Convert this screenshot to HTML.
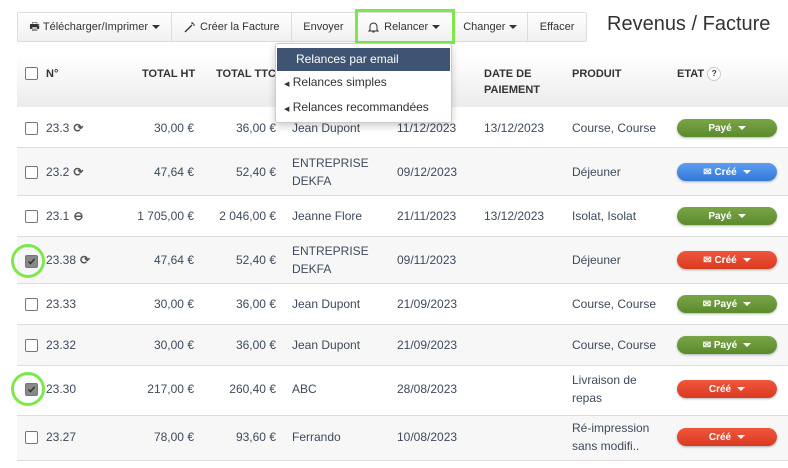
<!DOCTYPE html>
<html><head><meta charset="utf-8"><style>
*{box-sizing:border-box;margin:0;padding:0}
body{width:788px;height:468px;background:#fff;font-family:"Liberation Sans",sans-serif;color:#444;position:relative;overflow:hidden;font-size:12px}
.a{position:absolute;white-space:nowrap}
.tb{position:absolute;top:12px;left:17px;height:30px;width:570px;border:1px solid #ddd;border-radius:2px;background:linear-gradient(#fff,#f0f0f0);display:flex}
.tb div{height:28px;border-right:1px solid #ddd;font-size:11px;color:#333;display:flex;align-items:center;justify-content:center}
.car{display:inline-block;border-left:4px solid transparent;border-right:4px solid transparent;border-top:4px solid #333;margin-left:4px}
.hdr{position:absolute;left:17px;top:55px;width:771px;height:52px;background:linear-gradient(#fff,#ececec)}
.h{font-weight:bold;font-size:11px;color:#333;line-height:16px}
.row{position:absolute;left:17px;width:771px;border-bottom:1px solid #ddd}
.g{background:#f7f7f7}
.cb{position:absolute;left:25px;width:13px;height:13px;border:1px solid #777;border-radius:2px;background:#fff}
.cb.c{background:#888;border-color:#777}
.cb.c svg{position:absolute;left:1px;top:1px}
.t{font-size:12px;color:#3d4a5c;line-height:18px}
.b{position:absolute;left:677px;width:100px;height:18px;border-radius:9px;color:#fff;font-size:10px;font-weight:bold;display:flex;align-items:center;justify-content:center;box-shadow:0 1px 2px rgba(0,0,0,.3)}
.b .car{border-top-color:#fff;margin-left:6px}
.pg{background:linear-gradient(#7aa547,#5a8a2c)}
.pb{background:linear-gradient(#5a9ef0,#3577d8)}
.pr{background:linear-gradient(#f0563c,#d93a22)}
.ring{position:absolute;width:34px;height:34px;border:3px solid #7ee84a;border-radius:50%}
.ic{font-weight:bold;margin-left:4px;color:#555}
</style></head><body>
<div class="tb">
<div style="width:155px">🖶&nbsp;Télécharger/Imprimer<span class="car"></span></div>
<div style="width:120px"><svg width="11" height="11" viewBox="0 0 11 11" style="margin-right:5px"><path d="M1 10L8 3" stroke="#333" stroke-width="1.3"/><path d="M8 0v2M9 3h2M9.5 1l-1 1" stroke="#333"/></svg>Créer la Facture</div>
<div style="width:64px">Envoyer</div>
<div style="width:98px"><svg width="11" height="12" viewBox="0 0 11 12" style="margin-right:5px"><path d="M2 9V5.5a3.5 3.5 0 0 1 7 0V9l1 1H1z" fill="none" stroke="#333"/><path d="M4.5 11h2" stroke="#333"/></svg>Relancer<span class="car"></span></div>
<div style="width:75px">Changer<span class="car"></span></div>
<div style="width:58px;border-right:none">Effacer</div>
</div>
<div class="a" style="left:355px;top:9px;width:100px;height:35px;border:3px solid #7ee84a"></div>
<div class="a" style="left:607px;top:13px;font-size:20px;color:#333">Revenus / Facture</div>

<div class="hdr"></div>
<div class="cb" style="top:67px"></div>
<div class="a h" style="left:46px;top:66px">N°</div>
<div class="a h" style="left:142px;top:66px">TOTAL HT</div>
<div class="a h" style="left:216px;top:66px">TOTAL TTC</div>
<div class="a h" style="left:484px;top:66px">DATE DE<br>PAIEMENT</div>
<div class="a h" style="left:572px;top:66px">PRODUIT</div>
<div class="a h" style="left:677px;top:66px">ETAT <span style="display:inline-block;width:14px;height:14px;border:1px solid #ccc;border-radius:50%;background:#fff;font-size:8px;text-align:center;line-height:12px;vertical-align:middle">?</span></div>

<div class="row" style="top:107px;height:41px"></div>
<div class="row g" style="top:148px;height:48px"></div>
<div class="row" style="top:196px;height:41px"></div>
<div class="row g" style="top:237px;height:47px"></div>
<div class="row" style="top:284px;height:41px"></div>
<div class="row g" style="top:325px;height:41px"></div>
<div class="row" style="top:366px;height:50px"></div>
<div class="row g" style="top:416px;height:45px"></div>

<div class="cb" style="top:122px"></div><div class="a t" style="left:46px;top:119px">23.3<span class="ic">⟳</span></div><div class="a t" style="right:594px;top:119px">30,00 €</div><div class="a t" style="right:512px;top:119px">36,00 €</div><div class="a t" style="left:292px;top:119px">Jean Dupont</div><div class="a t" style="left:397px;top:119px">11/12/2023</div><div class="a t" style="left:484px;top:119px">13/12/2023</div><div class="a t" style="left:572px;top:119px">Course, Course</div><div class="b pg" style="top:119px">Payé<span class="car"></span></div>

<div class="cb" style="top:166px"></div><div class="a t" style="left:46px;top:163px">23.2<span class="ic">⟳</span></div><div class="a t" style="right:594px;top:163px">47,64 €</div><div class="a t" style="right:512px;top:163px">52,40 €</div><div class="a t" style="left:292px;top:154px">ENTREPRISE<br>DEKFA</div><div class="a t" style="left:397px;top:163px">09/12/2023</div><div class="a t" style="left:572px;top:163px">Déjeuner</div><div class="b pb" style="top:163px">✉&nbsp;Créé<span class="car"></span></div>

<div class="cb" style="top:210px"></div><div class="a t" style="left:46px;top:207px">23.1<span class="ic">⊖</span></div><div class="a t" style="right:594px;top:207px">1 705,00 €</div><div class="a t" style="right:512px;top:207px">2 046,00 €</div><div class="a t" style="left:292px;top:207px">Jeanne Flore</div><div class="a t" style="left:397px;top:207px">21/11/2023</div><div class="a t" style="left:484px;top:207px">13/12/2023</div><div class="a t" style="left:572px;top:207px">Isolat, Isolat</div><div class="b pg" style="top:207px">Payé<span class="car"></span></div>

<div class="cb c" style="top:255px"><svg width="9" height="9" viewBox="0 0 9 9"><path d="M1.5 4.5l2 2 4-4.5" fill="none" stroke="#333" stroke-width="1.5"/></svg></div><div class="a t" style="left:46px;top:251px">23.38<span class="ic">⟳</span></div><div class="a t" style="right:594px;top:251px">47,64 €</div><div class="a t" style="right:512px;top:251px">52,40 €</div><div class="a t" style="left:292px;top:242px">ENTREPRISE<br>DEKFA</div><div class="a t" style="left:397px;top:251px">09/11/2023</div><div class="a t" style="left:572px;top:251px">Déjeuner</div><div class="b pr" style="top:251px">✉&nbsp;Créé<span class="car"></span></div>
<div class="ring" style="left:11px;top:244px"></div>

<div class="cb" style="top:298px"></div><div class="a t" style="left:46px;top:295px">23.33</div><div class="a t" style="right:594px;top:295px">30,00 €</div><div class="a t" style="right:512px;top:295px">36,00 €</div><div class="a t" style="left:292px;top:295px">Jean Dupont</div><div class="a t" style="left:397px;top:295px">21/09/2023</div><div class="a t" style="left:572px;top:295px">Course, Course</div><div class="b pg" style="top:295px">✉&nbsp;Payé<span class="car"></span></div>

<div class="cb" style="top:339px"></div><div class="a t" style="left:46px;top:336px">23.32</div><div class="a t" style="right:594px;top:336px">30,00 €</div><div class="a t" style="right:512px;top:336px">36,00 €</div><div class="a t" style="left:292px;top:336px">Jean Dupont</div><div class="a t" style="left:397px;top:336px">21/09/2023</div><div class="a t" style="left:572px;top:336px">Course, Course</div><div class="b pg" style="top:336px">✉&nbsp;Payé<span class="car"></span></div>

<div class="cb c" style="top:383px"><svg width="9" height="9" viewBox="0 0 9 9"><path d="M1.5 4.5l2 2 4-4.5" fill="none" stroke="#333" stroke-width="1.5"/></svg></div><div class="a t" style="left:46px;top:380px">23.30</div><div class="a t" style="right:594px;top:380px">217,00 €</div><div class="a t" style="right:512px;top:380px">260,40 €</div><div class="a t" style="left:292px;top:380px">ABC</div><div class="a t" style="left:397px;top:380px">28/08/2023</div><div class="a t" style="left:572px;top:371px">Livraison de<br>repas</div><div class="b pr" style="top:380px">Créé<span class="car"></span></div>
<div class="ring" style="left:11px;top:372px"></div>

<div class="cb" style="top:431px"></div><div class="a t" style="left:46px;top:428px">23.27</div><div class="a t" style="right:594px;top:428px">78,00 €</div><div class="a t" style="right:512px;top:428px">93,60 €</div><div class="a t" style="left:292px;top:428px">Ferrando</div><div class="a t" style="left:397px;top:428px">10/08/2023</div><div class="a t" style="left:572px;top:419px">Ré-impression<br>sans modifi..</div><div class="b pr" style="top:428px">Créé<span class="car"></span></div>

<div class="a" style="left:275px;top:43px;width:177px;height:80px;background:#fff;border:1px solid #ccc;border-radius:3px;box-shadow:0 3px 8px rgba(0,0,0,.2)">
<div style="margin:4px 1px 0;height:23px;background:#3f5472;color:#fff;font-size:12px;line-height:23px;padding-left:19px">Relances par email</div>
<div style="font-size:12px;color:#333;line-height:22px;padding-left:8px"><span style="font-size:7px">◀</span> Relances simples</div>
<div style="font-size:12px;color:#333;line-height:22px;padding-left:8px"><span style="font-size:7px">◀</span> Relances recommandées</div>
</div>
</body></html>
